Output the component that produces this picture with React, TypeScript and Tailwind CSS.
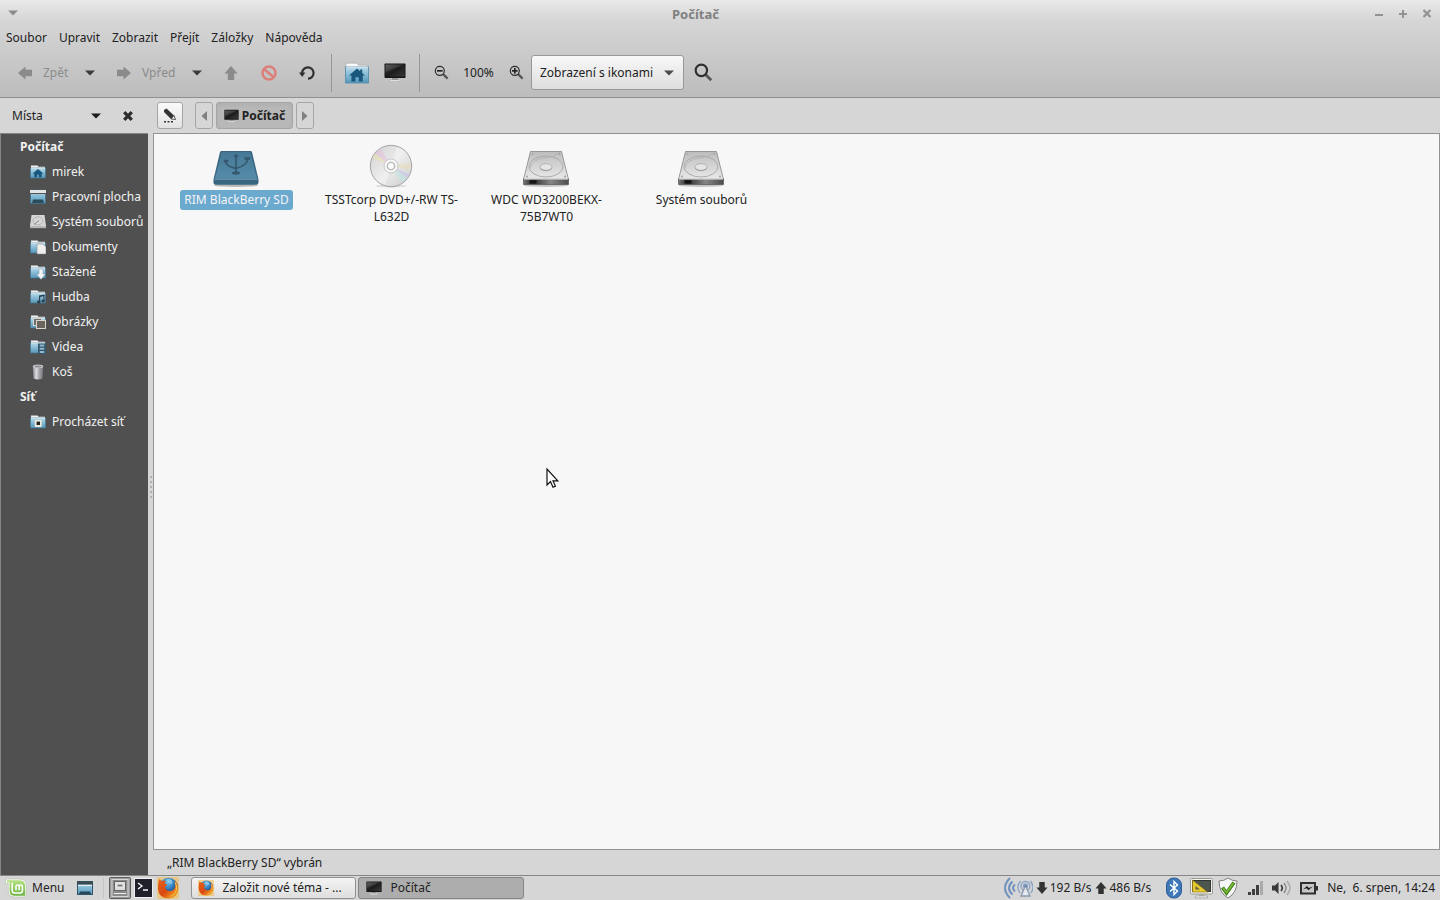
import React from "react";

function Gradients() {
  return (
    <svg className="absolute" width="0" height="0" aria-hidden="true">
      <defs>
        <linearGradient id="folder" x1="0" y1="0" x2="0" y2="1">
          <stop offset="0" stopColor="#b9d9e8" />
          <stop offset="0.5" stopColor="#83b9d4" />
          <stop offset="1" stopColor="#5797b9" />
        </linearGradient>
        <linearGradient id="screen" x1="0" y1="0" x2="1" y2="1">
          <stop offset="0" stopColor="#4a4a4a" />
          <stop offset="0.5" stopColor="#1c1c1c" />
          <stop offset="1" stopColor="#3a3a3a" />
        </linearGradient>
        <linearGradient id="driveTop" x1="0" y1="0" x2="0" y2="1">
          <stop offset="0" stopColor="#bdbdbd" />
          <stop offset="1" stopColor="#e9e9e9" />
        </linearGradient>
        <linearGradient id="driveFront" x1="0" y1="0" x2="1" y2="0">
          <stop offset="0" stopColor="#777" />
          <stop offset="0.2" stopColor="#2c2c2c" />
          <stop offset="0.6" stopColor="#858585" />
          <stop offset="1" stopColor="#4c4c4c" />
        </linearGradient>
        <linearGradient id="usbTop" x1="0" y1="0" x2="0" y2="1">
          <stop offset="0" stopColor="#457894" />
          <stop offset="1" stopColor="#568caa" />
        </linearGradient>
        <linearGradient id="disc" x1="0" y1="0" x2="1" y2="1">
          <stop offset="0" stopColor="#cfcfcf" />
          <stop offset="0.5" stopColor="#ececec" />
          <stop offset="1" stopColor="#cccccc" />
        </linearGradient>
        <linearGradient id="bin" x1="0" y1="0" x2="1" y2="0">
          <stop offset="0" stopColor="#8a8a90" />
          <stop offset="0.35" stopColor="#dcdce0" />
          <stop offset="0.6" stopColor="#a4a4aa" />
          <stop offset="1" stopColor="#77777d" />
        </linearGradient>
        <linearGradient id="mint" x1="0" y1="0" x2="0" y2="1">
          <stop offset="0" stopColor="#b4e283" />
          <stop offset="1" stopColor="#6db442" />
        </linearGradient>
        <linearGradient id="fox" x1="0" y1="0" x2="1" y2="1">
          <stop offset="0" stopColor="#e8641b" />
          <stop offset="0.5" stopColor="#d9480f" />
          <stop offset="1" stopColor="#f9c22e" />
        </linearGradient>
        <radialGradient id="globe" cx="0.45" cy="0.25" r="0.8">
          <stop offset="0" stopColor="#6fc3ec" />
          <stop offset="0.5" stopColor="#2a6fb3" />
          <stop offset="1" stopColor="#142a5c" />
        </radialGradient>
      </defs>
    </svg>
  );
}

function Caret({ color = "#3a3a3a" }: { color?: string }) {
  return (
    <svg width="10" height="6" viewBox="0 0 10 6" aria-hidden="true">
      <path d="M0 0.5h10L5 5.5z" fill={color} />
    </svg>
  );
}

function SideArrow({ left }: { left?: boolean }) {
  return (
    <svg width="6" height="10" viewBox="0 0 6 10" aria-hidden="true">
      <path d={left ? "M6 0v10L0.5 5z" : "M0 0v10L5.5 5z"} fill="#808080" />
    </svg>
  );
}

function Arrow({ dir, color, size = 14 }: { dir: "left" | "right" | "up" | "down"; color: string; size?: number }) {
  const turn = { left: 0, up: 90, right: 180, down: 270 }[dir];
  return (
    <svg width={size} height={size} viewBox="0 0 14 14" aria-hidden="true">
      <path d="M0 7L7.500 0.500v3.300H14v6.400H7.500v3.300z" fill={color} transform={`rotate(${turn} 7 7)`} />
    </svg>
  );
}

function Monitor({ width, height }: { width: number; height: number }) {
  return (
    <svg width={width} height={height} viewBox="0 0 22 19" aria-hidden="true">
      <path d="M8.500 14.500h5l0.800 2.800H7.700z" fill="#929292" />
      <path d="M6 17h10v1.600H6z" fill="#f4f4f4" stroke="#a0a0a0" strokeWidth="0.500" />
      <rect x="0.500" y="0.500" width="21" height="14.500" rx="0.800" fill="#161616" />
      <rect x="1.500" y="1.500" width="19" height="12" fill="url(#screen)" />
      <path d="M1.500 1.500h19L1.500 9z" fill="#fff" opacity="0.100" />
    </svg>
  );
}

function HomeFolder() {
  return (
    <svg width="24" height="22" viewBox="0 0 24 22" aria-hidden="true">
      <path d="M1 1.200h11l1.200 2H23V8H1z" fill="#fafafa" stroke="#a9a9a9" strokeWidth="0.600" />
      <rect x="0.500" y="5" width="23" height="16" fill="url(#folder)" stroke="#4f8aab" strokeWidth="0.800" />
      <path d="M1.200 5.700h21.600" stroke="#d7eaf4" />
      <path d="M12 6.500L4 13.500h2.400v6h4V15.200h3.400v4.300h4v-6H20l-2.800-2.500V7.500h-2v1.700z" fill="#19587c" />
    </svg>
  );
}

type Kind = "home" | "desktop" | "disk" | "doc" | "down" | "music" | "pic" | "video" | "trash" | "net";

function PlaceIcon({ kind }: { kind: Kind }) {
  if (kind === "desktop")
    return (
      <svg width="16" height="16" viewBox="0 0 16 16" aria-hidden="true">
        <rect x="0.500" y="1" width="15" height="13.500" fill="url(#folder)" stroke="#3b6c87" strokeWidth="0.600" />
        <rect x="0" y="1" width="16" height="3" fill="#e4e4e4" />
        <path d="M0 4.500h16" stroke="#555" />
        <path d="M3 10.500h10l1 3.500H2z" fill="#2c4c5e" />
      </svg>
    );
  if (kind === "disk")
    return (
      <svg width="16" height="16" viewBox="0 0 16 16" aria-hidden="true">
        <path d="M1.500 1h13L16 12H0z" fill="#d6d6d6" />
        <path d="M0 12h16v2.500H0z" fill="#b5b5b5" />
        <path d="M0 14.800h16" stroke="#333" strokeWidth="0.600" />
        <ellipse cx="8" cy="6.800" rx="5" ry="4" fill="none" stroke="#aaa" strokeWidth="0.800" />
        <path d="M4 10.500l5-4" stroke="#888" />
      </svg>
    );
  if (kind === "trash")
    return (
      <svg width="16" height="16" viewBox="0 0 16 16" aria-hidden="true">
        <path d="M2.800 2.500h10.400L12.400 14.500q-4.400 1.800-8.800 0z" fill="url(#bin)" />
        <ellipse cx="8" cy="2.400" rx="5.200" ry="1.800" fill="#c9c9cd" />
        <ellipse cx="8" cy="2.400" rx="3.800" ry="1" fill="#929298" />
      </svg>
    );
  return (
    <svg width="16" height="16" viewBox="0 0 16 16" aria-hidden="true">
      <path d="M1 1.500h6.500l1 1.300H15V6H1z" fill="#f2f2f2" />
      <rect x="0.500" y="4" width="15" height="10" fill="url(#folder)" stroke="#3f7693" strokeWidth="0.600" />
      <path d="M1 4.500h14" stroke="#d3e8f2" strokeWidth="0.800" />
      {kind === "home" && <path d="M8 5L2.500 9.700h1.800v3.500h2.800v-2.500h1.800v2.500h2.800V9.700h1.800z" fill="#19587c" />}
      {kind === "doc" && <path d="M7 5h6l3 3v7H7z" fill="#f0efed" stroke="#8b8b8b" strokeWidth="0.600" />}
      {kind === "down" && <path d="M9 5h4v5h2.500L11 15.500 6.500 10H9z" fill="#f3f3f3" stroke="#6c8c9c" strokeWidth="0.400" />}
      {kind === "music" && (
        <g fill="#2c4150">
          <path d="M9 6.500l5.500-1v1.600l-4.300.8v5H9z" />
          <path d="M13.400 6h1.100v5.600h-1.100z" />
          <ellipse cx="8.800" cy="13" rx="1.800" ry="1.400" />
          <ellipse cx="13.200" cy="12" rx="1.800" ry="1.400" />
        </g>
      )}
      {kind === "pic" && (
        <g stroke="#d9d6cd">
          <rect x="3.500" y="4.500" width="8" height="7" fill="#6b6f6c" />
          <rect x="6.500" y="6.500" width="9" height="8" fill="#6b665d" />
        </g>
      )}
      {kind === "video" && (
        <g>
          <rect x="8" y="4.500" width="8" height="10.500" fill="#35566a" />
          <path d="M9.700 5.500h4.600v2H9.700zM9.700 8.700h4.600v2H9.700zM9.700 12h4.600v2H9.700z" fill="#8fb6cc" />
        </g>
      )}
      {kind === "net" && (
        <g>
          <rect x="4.800" y="6" width="6.800" height="7" fill="#efe9dc" />
          <rect x="6.600" y="7.600" width="3.400" height="3.400" fill="#222" />
        </g>
      )}
    </svg>
  );
}

function HardDisk() {
  return (
    <svg width="48" height="48" viewBox="1 -1 48 48" aria-hidden="true">
      <ellipse cx="24" cy="42.300" rx="22.500" ry="1.700" fill="#000" opacity="0.200" />
      <path d="M8.500 8.500h31l7 28h-45z" fill="url(#driveTop)" stroke="#858585" strokeWidth="0.800" strokeLinejoin="round" />
      <path d="M1.500 36h45v5.500h-45z" fill="url(#driveFront)" stroke="#555" strokeWidth="0.700" />
      <path d="M2 36h44" stroke="#f5f5f5" />
      <path d="M7.500 37.200h7v3.300h-7z" fill="#151515" />
      <ellipse cx="24" cy="23.500" rx="17" ry="10.500" fill="none" stroke="#a6a6a6" strokeWidth="0.900" />
      <path d="M8 25q2-9 15-10 9-1 15-5.500" fill="none" stroke="#b0b0b0" strokeWidth="0.800" />
      <ellipse cx="24" cy="24" rx="6" ry="3.300" fill="#e6e6e6" stroke="#aaa" strokeWidth="0.800" />
      <path d="M18 25.500q6 4.500 12 0" fill="none" stroke="#999" strokeWidth="0.800" />
      <g fill="#999">
        <circle cx="10.500" cy="11" r="0.800" />
        <circle cx="37.500" cy="11" r="0.800" />
        <circle cx="5" cy="33.500" r="0.900" />
        <circle cx="43" cy="33.500" r="0.900" />
      </g>
    </svg>
  );
}

function UsbDisk() {
  return (
    <svg width="48" height="48" viewBox="1 -1 48 48" aria-hidden="true">
      <ellipse cx="24" cy="42.300" rx="22" ry="1.700" fill="#000" opacity="0.250" />
      <path d="M9.500 8h29q1.200 0 1.600 1.400l6.400 27v3.200q0 2.200-2.200 2.200H3.700q-2.200 0-2.200-2.200v-3.200l6.400-27Q8.300 8 9.500 8z" fill="#3a6680" />
      <path d="M9.800 9h28.400l6.800 26.500H3z" fill="url(#usbTop)" />
      <path d="M2.500 36.200h43" stroke="#7aa8c1" strokeWidth="0.900" />
      <g fill="none" stroke="#33586f" strokeWidth="1.700">
        <path d="M24 13v16" />
        <path d="M13.800 18.500q0 5 10.200 6.800Q34.800 23 35.800 16" />
      </g>
      <g fill="#33586f">
        <path d="M24 10.800l2.800 3.200h-5.600z" />
        <ellipse cx="24" cy="30" rx="4" ry="1.700" />
        <ellipse cx="14" cy="18" rx="2.600" ry="1.500" />
        <path d="M32.500 14.200h5.500v2.600h-5.500z" />
      </g>
    </svg>
  );
}

function Disc() {
  return (
    <svg width="48" height="48" viewBox="1 -1 48 48" aria-hidden="true">
      <ellipse cx="24" cy="43" rx="16" ry="1.500" fill="#000" opacity="0.100" />
      <circle cx="24" cy="23" r="20.700" fill="url(#disc)" stroke="#9c9c9c" strokeWidth="0.900" />
      <g opacity="0.550">
        <path d="M24 23L5.500 14.500 11 7.500z" fill="#e9e2a8" />
        <path d="M24 23L8 10.500l5.500-5z" fill="#e5bfdd" />
        <path d="M24 23L42.500 31l-5 7.500z" fill="#c9c2ee" />
        <path d="M24 23l16.500 12-5.500 5z" fill="#bce4e0" />
        <path d="M24 23l6-19 8 4.500z" fill="#f5f5f5" />
        <path d="M24 23l-6 19-7-4z" fill="#f5f5f5" />
        <path d="M24 23l20-3v7z" fill="#ecdcb8" />
      </g>
      <circle cx="24" cy="23" r="7" fill="#f6f6f6" stroke="#bdbdbd" strokeWidth="0.800" />
      <circle cx="24" cy="23" r="3.600" fill="#fff" stroke="#b5b5b5" strokeWidth="1.400" />
    </svg>
  );
}

function Magnifier({ size, sign }: { size: number; sign?: "minus" | "plus" }) {
  return (
    <svg width={size} height={size} viewBox="0 0 16 16" fill="none" aria-hidden="true">
      <path d="M9.500 9.500L14.500 14.500" stroke="#555" strokeWidth="2.400" />
      <circle cx="6.200" cy="6.200" r="4.800" stroke="#2e2e2e" strokeWidth={sign ? 1.3 : 1.8} />
      {sign && <path d="M3.200 6.200h6" stroke="#222" strokeWidth="1.800" />}
      {sign === "plus" && <path d="M6.200 3.200v6" stroke="#222" strokeWidth="1.800" />}
    </svg>
  );
}

function Firefox({ size }: { size: number }) {
  return (
    <svg width={size} height={size} viewBox="0 0 22 22" aria-hidden="true">
      <rect width="22" height="22" fill="#f3b93c" opacity="0.500" />
      <circle cx="11.500" cy="10" r="9.300" fill="url(#globe)" />
      <path d="M9 3q3-2 6 0-1 2 1 3-3 2-5-1z" fill="#9ad9f2" opacity="0.700" />
      <path
        d="M2 2.200q1.500.2 2.600 2Q6.600 3 9 4.200 7.600 5 7.600 6.600q1.200.6 2.800.6-.6 1.600-2.300 2.200.2 3.600 3.600 4.600 4.800.6 6.300-3.400Q19 7 17.300 3.400q4 3 4 8-.3 9.800-10 10Q1.600 21 .9 11.500.8 6 2 2.200z"
        fill="url(#fox)"
      />
      <path d="M17.500 4q3.600 4 2.200 9-2 6-8.200 6.800 8.500-2.500 7.400-10.300z" fill="#fbd34a" />
    </svg>
  );
}

function MintLogo() {
  return (
    <svg width="22" height="20" viewBox="0 0 22 20" aria-hidden="true">
      <path d="M0.500 1h14Q21.500 1 21.500 8v11H9.500Q3.200 19 3.200 12.500V5.500H.5z" fill="#f7f7f7" stroke="#b9c7ad" strokeWidth="0.700" />
      <path d="M2 2.300h12.300Q20.200 2.300 20.200 8.300v9.400H9.800q-5.200 0-5.200-5.300V4.300H2z" fill="url(#mint)" />
      <path d="M7.200 4.500v8q0 2.600 2.600 2.600h5q2.600 0 2.600-2.600V8.600q0-1.700-1.600-1.700t-1.600 1.700v3.700M14.200 8.600q0-1.700-1.600-1.700T11 8.600v3.700" fill="none" stroke="#fff" strokeWidth="1.500" />
    </svg>
  );
}

const menus = ["Soubor", "Upravit", "Zobrazit", "Přejít", "Záložky", "Nápověda"];

const places: { name: string; kind: Kind }[] = [
  { name: "mirek", kind: "home" },
  { name: "Pracovní plocha", kind: "desktop" },
  { name: "Systém souborů", kind: "disk" },
  { name: "Dokumenty", kind: "doc" },
  { name: "Stažené", kind: "down" },
  { name: "Hudba", kind: "music" },
  { name: "Obrázky", kind: "pic" },
  { name: "Videa", kind: "video" },
  { name: "Koš", kind: "trash" },
];

const drives = [
  { lines: ["RIM BlackBerry SD"], icon: <UsbDisk />, selected: true },
  { lines: ["TSSTcorp DVD+/-RW TS-", "L632D"], icon: <Disc />, selected: false },
  { lines: ["WDC WD3200BEKX-", "75B7WT0"], icon: <HardDisk />, selected: false },
  { lines: ["Systém souborů"], icon: <HardDisk />, selected: false },
];

const toolButton = "flex h-[35px] w-[38px] items-center justify-center";
const crumb = "flex h-[27px] items-center justify-center rounded-[3px] border border-[#a6a6a6]";

function Place({ name, kind }: { name: string; kind: Kind }) {
  return (
    <li>
      <a href="#" className="flex h-[25px] items-center gap-[6px] pl-[29px] whitespace-nowrap">
        <PlaceIcon kind={kind} />
        {name}
      </a>
    </li>
  );
}

function Separator() {
  return <div className="mr-[6px] ml-[5px] h-[38px] w-px bg-[#969696]" />;
}

function TitleBar() {
  return (
    <div className="flex h-[28px] items-center text-[#808080]">
      <button aria-label="Nabídka okna" className="flex w-6 justify-center pb-[2px] pl-[2px]">
        <Caret color="#8c8c8c" />
      </button>
      <h1 className="flex-1 text-center text-[13px] font-bold">Počítač</h1>
      <div className="flex w-[73px]">
        <button aria-label="Minimalizovat" className="flex w-6 justify-center">
          <svg width="10" height="10" viewBox="0 0 10 10">
            <path d="M1 6h8" stroke="#929292" strokeWidth="2" />
          </svg>
        </button>
        <button aria-label="Maximalizovat" className="flex w-6 justify-center">
          <svg width="10" height="10" viewBox="0 0 10 10">
            <path d="M1 5h8M5 1v8" stroke="#929292" strokeWidth="2" />
          </svg>
        </button>
        <button aria-label="Zavřít" className="flex w-6 justify-center">
          <svg width="10" height="10" viewBox="0 0 10 10">
            <path d="M1.500 1l7 7M8.500 1l-7 7" stroke="#929292" strokeWidth="2.300" />
          </svg>
        </button>
      </div>
    </div>
  );
}

function Toolbar() {
  return (
    <div className="flex h-[49px] items-center pl-1">
      <button className="flex w-[74px] items-center gap-[11px] pl-[14px] text-[#8b8b8b]">
        <Arrow dir="left" color="#8b8b8b" />
        Zpět
      </button>
      <button aria-label="Historie zpět" className="flex w-6 justify-center"><Caret /></button>
      <button className="flex w-[83px] items-center gap-[11px] pl-[15px] text-[#8b8b8b]">
        <Arrow dir="right" color="#8b8b8b" />
        Vpřed
      </button>
      <button aria-label="Historie vpřed" className="mr-[3px] flex w-6 justify-center"><Caret /></button>
      <button aria-label="Nahoru" className={toolButton}><Arrow dir="up" color="#8b8b8b" /></button>
      <button aria-label="Zastavit" className={toolButton}>
        <svg width="16" height="16" viewBox="0 0 16 16" fill="none" stroke="#dc7f7b" strokeWidth="2.500">
          <circle cx="8" cy="8" r="6.500" />
          <path d="M3.500 4.500l9 7.500" />
        </svg>
      </button>
      <button aria-label="Obnovit" className={toolButton}>
        <svg width="16" height="16" viewBox="0 0 16 16" fill="none">
          <path d="M3.200 8.500A5.700 5.700 0 1 1 9 13.700" stroke="#303030" strokeWidth="2.200" />
          <path d="M0 7.500h6.400L3.200 12z" fill="#303030" />
        </svg>
      </button>
      <Separator />
      <button aria-label="Domů" className={toolButton}><HomeFolder /></button>
      <button aria-label="Počítač" className={toolButton}><Monitor width={22} height={19} /></button>
      <Separator />
      <button aria-label="Oddálit" className="flex w-[30px] justify-center"><Magnifier size={15} sign="minus" /></button>
      <span className="w-[45px] text-center">100%</span>
      <button aria-label="Přiblížit" className="flex w-[30px] justify-center"><Magnifier size={15} sign="plus" /></button>
      <div className="relative">
        <select
          aria-label="Zobrazení"
          className="h-[35px] w-[153px] appearance-none rounded-[3px] border border-[#989898] bg-linear-to-b from-[#f8f8f8] to-[#dedede] pl-2"
        >
          <option>Zobrazení s ikonami</option>
        </select>
        <span className="pointer-events-none absolute inset-y-0 right-[10px] flex items-center"><Caret color="#4a4a4a" /></span>
      </div>
      <button aria-label="Hledat" className={toolButton}><Magnifier size={19} /></button>
    </div>
  );
}

function Sidebar() {
  return (
    <aside className="flex w-[148px] flex-col">
      <div className="flex h-[35px] items-center">
        <button className="flex flex-1 items-center justify-between pl-3">
          Místa
          <Caret color="#1c1c1c" />
        </button>
        <button aria-label="Zavřít panel" className="mr-[15px] ml-[22px]">
          <svg width="10" height="10" viewBox="0 0 10 10">
            <path d="M1.200 1.200l7.600 7.600M8.800 1.200l-7.600 7.600" stroke="#2c2c2c" strokeWidth="3.200" />
          </svg>
        </button>
      </div>
      <nav className="flex-1 border-t border-l border-[#858585] bg-[#505050] text-[#f2f2f2]">
        <h2 className="h-[25px] pl-[19px] leading-[25px] font-bold">Počítač</h2>
        <ul>{places.map((p) => <Place key={p.name} {...p} />)}</ul>
        <h2 className="h-[25px] pl-[19px] leading-[25px] font-bold">Síť</h2>
        <ul><Place name="Procházet síť" kind="net" /></ul>
      </nav>
    </aside>
  );
}

function Panel() {
  return (
    <footer className="flex h-[25px] items-center border-t border-[#868686] bg-[#d6d6d6] pb-px">
      <button className="ml-[5px] flex items-center gap-[5px]"><MintLogo />Menu</button>
      <button aria-label="Zobrazit plochu" className="ml-[13px]">
        <svg width="16" height="16" viewBox="0 0 16 16">
          <rect x="0.500" y="1.500" width="15" height="13" fill="url(#folder)" stroke="#31556b" />
          <path d="M0 1.500h16v3H0z" fill="#3c4a52" />
          <path d="M1 5.500h14" stroke="#e5f1f6" />
          <path d="M3 11.500h10l1 2.500H2z" fill="#27465a" />
        </svg>
      </button>
      <div className="ml-[10px] h-5 w-px bg-[#c4c4c4]" />
      <div className="ml-[5px] flex items-center gap-[2px]">
        <button aria-label="Soubory">
          <svg width="22" height="22" viewBox="0 0 22 22">
            <rect x="0.500" y="0.500" width="21" height="21" rx="1" fill="#9b9b9b" stroke="#5d5d5d" />
            <rect x="3" y="2.500" width="16" height="17" fill="#8a8a8a" stroke="#d6d6d6" />
            <rect x="5.500" y="4.500" width="11" height="9" fill="#ddd" stroke="#666" />
            <path d="M8 7h6v3H8zM5 16.500h12" stroke="#eee" fill="#777" />
          </svg>
        </button>
        <button aria-label="Terminál">
          <svg width="22" height="22" viewBox="0 0 22 22">
            <rect x="1.500" y="1.500" width="18" height="19" fill="#20202b" stroke="#efefef" />
            <path d="M5 6l4 3-4 3M10 13h5" fill="none" stroke="#f5f5f5" strokeWidth="1.400" />
          </svg>
        </button>
        <button aria-label="Firefox"><Firefox size={22} /></button>
      </div>
      <div className="ml-3 flex gap-[2px]">
        <button className="flex h-[22px] w-[165px] items-center gap-2 rounded-[3px] border border-[#929292] bg-linear-to-b from-[#f4f4f4] to-[#dedede] pl-[6px] whitespace-nowrap">
          <Firefox size={16} />
          Založit nové téma - ...
        </button>
        <button className="flex h-[22px] w-[166px] items-center gap-2 rounded-[3px] border border-[#858585] bg-[#adadad] pl-[7px]">
          <Monitor width={16} height={14} />
          Počítač
        </button>
      </div>
      <div className="ml-auto flex items-center pr-[5px] whitespace-nowrap">
        <svg width="30" height="22" viewBox="0 0 30 22" fill="none" className="mr-[3px]">
          <g stroke="#6f91bd" strokeWidth="2">
            <path d="M7 1Q-3 11 7 21" />
            <path d="M9.500 4.500Q2.500 11 9.500 17.500" />
            <path d="M12 7.500Q8 11 12 14.500" />
          </g>
          <g stroke="#88a3c5" strokeWidth="1.300">
            <path d="M17.500 4Q12.500 10 17 16M27.500 4Q32 10 28 16" />
            <circle cx="22.500" cy="9" r="4.500" />
            <circle cx="22.500" cy="9" r="2" fill="#7188a6" />
            <path d="M21.500 11l-3.500 8h9l-3.500-8" stroke="#8a98aa" fill="#e4eaf1" />
          </g>
        </svg>
        <Arrow dir="down" color="#333" size={12} />
        <span className="ml-[2px]">192 B/s</span>
        <span className="mr-[2px] ml-1"><Arrow dir="up" color="#333" size={12} /></span>
        <span>486 B/s</span>
        <svg width="16" height="22" viewBox="0 0 16 22" className="ml-[15px]">
          <rect x="0.500" y="1" width="15" height="20" rx="7" fill="#3f77b8" stroke="#2e5f9b" />
          <path d="M4 7.500l7.500 6.500L8 17.500v-13L11.500 8 4 14.500" fill="none" stroke="#fff" strokeWidth="1.400" />
        </svg>
        <svg width="23" height="22" viewBox="0 0 23 22" className="ml-2">
          <path d="M9 17h5v2H9z" fill="#b9b9b0" />
          <path d="M5.500 19h12v1.800h-12z" fill="#fafafa" stroke="#888" strokeWidth="0.600" />
          <rect x="0.500" y="1.500" width="22" height="15.500" rx="1" fill="#f4f3ea" stroke="#999" />
          <rect x="2.500" y="3.500" width="18" height="11" fill="#4c564f" stroke="#333" />
          <path d="M2.500 3v12h15z" fill="#e9ca2f" stroke="#7a6613" strokeWidth="0.600" />
          <path d="M5.500 9v3.500h4.500z" fill="#5d6349" />
        </svg>
        <svg width="20" height="22" viewBox="0 0 20 22" className="ml-[5px]">
          <path d="M10 1Q6 4 1 4q0 12 9 17 9-5 9-17-5 0-9-3z" fill="#f8f8f8" stroke="#7e7e7e" />
          <path d="M4.500 10.500l4 5.500L16 5.500" fill="none" stroke="#3e7a18" strokeWidth="3.600" />
          <path d="M5 11l3.500 4.500L15.500 6" fill="none" stroke="#78ba35" strokeWidth="1.800" />
        </svg>
        <svg width="16" height="16" viewBox="0 0 16 16" className="ml-[10px]">
          <path d="M0 12h3v3H0zM4 9h3v6H4zM8 5h3v10H8z" fill="#3e3e3e" />
          <path d="M12 1h3v14h-3z" fill="#aaa" />
        </svg>
        <svg width="20" height="16" viewBox="0 0 20 16" className="ml-2">
          <path d="M0 5.500h3L6.500 2v12L3 10.500H0z" fill="#3a3a3a" />
          <path d="M9 5q2.500 3 0 6" fill="none" stroke="#3a3a3a" strokeWidth="1.700" />
          <path d="M12 3q4 5 0 10" fill="none" stroke="#8b8b8b" strokeWidth="1.500" />
          <path d="M15 1q6 7 0 14" fill="none" stroke="#a9a9a9" strokeWidth="1.500" />
        </svg>
        <svg width="18" height="16" viewBox="0 0 18 16" className="ml-2">
          <rect x="1" y="3" width="14" height="10.500" fill="#c7c7c7" stroke="#2f2f2f" strokeWidth="2" />
          <path d="M15.500 6h2.500v4.500h-2.500z" fill="#2f2f2f" />
          <path d="M3 9.500l4-3.500 2 2 4-1.800-4.500 4-2-2z" fill="#1e1e1e" />
        </svg>
        <time className="ml-[9px] whitespace-pre">Ne,  6. srpen, 14:24</time>
      </div>
    </footer>
  );
}

export default function App() {
  return (
    <div className="flex min-h-screen flex-col bg-[#d6d6d6] font-['Noto_Sans',sans-serif] text-[12px] leading-[17px] text-[#222]">
      <Gradients />
      <header className="border-b border-[#8f8f8f] bg-linear-to-b from-[#eaeaea] via-[#d6d6d6] via-20% to-[#bcbcbc]">
        <TitleBar />
        <nav className="flex h-[20px] items-center gap-3 pb-[2px] pl-[6px]">
          {menus.map((m) => <button key={m}>{m}</button>)}
        </nav>
        <Toolbar />
      </header>

      <div className="flex flex-1">
        <Sidebar />
        <div className="flex w-[5px] flex-col items-center justify-center gap-[3px]">
          {[0, 1, 2, 3, 4].map((n) => <span key={n} className="size-[2px] bg-[#b0b0b0]" />)}
        </div>
        <div className="flex flex-1 flex-col">
          <div className="flex h-[35px] items-center pl-1">
            <button aria-label="Upravit umístění" className={`${crumb} mr-3 w-[26px] bg-linear-to-b from-[#fafafa] to-[#e2e2e2]`}>
              <svg width="14" height="16" viewBox="0 0 14 16">
                <path d="M1 2l2.500-1.500L11 7.500 8 11 1 4z" fill="#333" />
                <path d="M11 7.500l1.500 4L8 11z" fill="#eee" stroke="#333" strokeWidth="0.800" />
                <path d="M1 13h2v1.500H1zM4.500 13h2v1.500h-2zM8 13h2v1.500H8z" fill="#333" />
              </svg>
            </button>
            <div className="flex gap-[3px]">
              <button aria-label="Předchozí" className={`${crumb} w-[18px]`}><SideArrow left /></button>
              <button className={`${crumb} w-[77px] gap-[3px] border-[#8e8e8e] bg-[#b8b8b8] font-bold inset-shadow-sm`}>
                <Monitor width={15} height={14} />
                Počítač
              </button>
              <button aria-label="Další" className={`${crumb} w-[18px]`}><SideArrow /></button>
            </div>
          </div>
          <main className="relative flex-1 border border-[#929292] bg-[#f7f7f7] pt-2 pl-[5px]">
            <ul className="flex flex-wrap">
              {drives.map((d) => (
                <li key={d.lines[0]} className="flex w-[155px] flex-col items-center">
                  {d.icon}
                  <span className={`rounded-[3px] px-1 pt-px pb-[2px] text-center ${d.selected ? "bg-[#6ba9cf] text-[#f5f5f5]" : ""}`}>
                    {d.lines.map((line) => <span key={line} className="block whitespace-nowrap">{line}</span>)}
                  </span>
                </li>
              ))}
            </ul>
            <svg className="absolute top-[334px] left-[392px]" width="14" height="22" viewBox="0 0 14 22" aria-hidden="true">
              <path d="M1 1v16l3.500-3.400 2.500 5.600 2.400-1.100-2.400-5.300h4.800z" fill="#fff" stroke="#111" strokeWidth="1.200" />
            </svg>
          </main>
          <div className="flex h-[25px] items-center pl-[14px]">„RIM BlackBerry SD“ vybrán</div>
        </div>
      </div>
      <Panel />
    </div>
  );
}
